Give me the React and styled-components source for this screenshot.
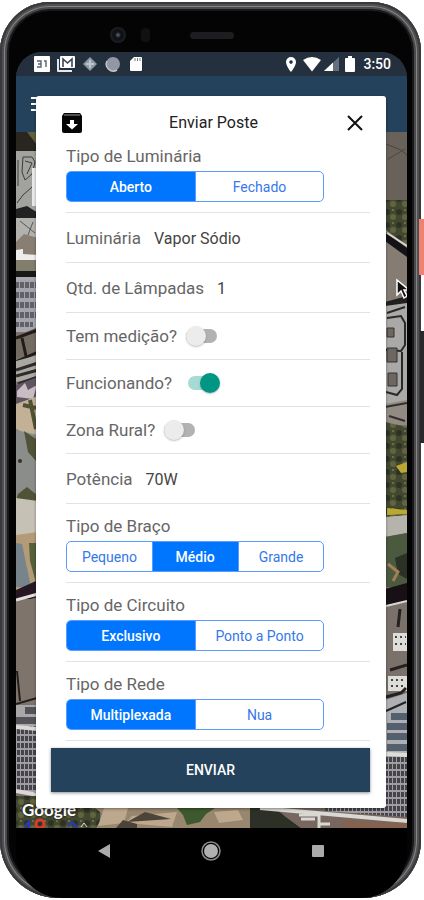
import React, { useState } from "react";
import styled, { createGlobalStyle } from "styled-components";

const GlobalStyle = createGlobalStyle`
  * { box-sizing: border-box; }
  body { margin: 0; background: #fff; font-family: Roboto, sans-serif; }
  button, input, select { font-family: inherit; }
`;

const Page = styled.main`
  max-width: 480px;
  margin: 0 auto;
  padding: 2px 3px 2px 0;
`;

const Device = styled.div`
  position: relative;
  padding: 0 14px 0 16px;
  border-radius: 50px 50px 58px 58px;
  background: #040405;
  box-shadow: inset 0 0 0 2px #39393b, inset 0 0 0 4px #505052,
    inset 0 0 0 5px #858587, inset 0 0 0 7px #4a4a4c, inset 0 0 0 9px #19191b;
`;

const SideKey = styled.span`
  position: absolute;
  right: -3px;
  top: ${(p) => p.$top}px;
  width: ${(p) => p.$width}px;
  height: ${(p) => p.$height}px;
  background: ${(p) => p.$color};
`;

const TopBezel = styled.div`
  display: grid;
  grid-template-columns: 1fr 44px 1fr;
  align-items: center;
  height: 50px;
  padding-top: 16px;
`;

const Sensors = styled.div`
  display: flex;
  align-items: center;
  justify-content: flex-end;
  gap: 15px;
  padding-right: 40px;
`;

const Lens = styled.span`
  width: 16px;
  height: 16px;
  border-radius: 50%;
  background: radial-gradient(circle, #4a5060 0 1px, #101116 3px 5px, #1d1d20 7px);
`;

const Sensor = styled.span`
  width: 9px;
  height: 14px;
  border-radius: 4px;
  background: #111113;
`;

const Speaker = styled.span`
  height: 7px;
  border-radius: 4px;
  background: #1d1d1f;
`;

const Screen = styled.div`
  overflow: hidden;
  border-radius: 26px 26px 0 0;
  background: #24425b;
`;

const StatusBar = styled.div`
  display: flex;
  align-items: center;
  justify-content: space-between;
  height: 24px;
  padding: 0 16px 0 18px;
  background: #25303f;
  color: #fff;
`;

const StatusGroup = styled.div`
  display: flex;
  align-items: center;
  gap: ${(p) => p.$gap}px;
`;

const Clock = styled.time`
  margin-left: 2px;
  font-size: 14px;
  font-weight: 500;
  line-height: 24px;
`;

const Stage = styled.div`
  display: grid;
  grid-template: 56px 1fr / 1fr;
`;

const AppBar = styled.header`
  grid-area: 1 / 1;
  padding: 16px 15px;
`;

const MenuButton = styled.button`
  display: block;
  padding: 4px 0;
  border: 0;
  background: none;
  line-height: 0;
`;

const MapArea = styled.div`
  grid-area: 2 / 1;
  display: grid;
  grid-template: 1fr / 1fr;
  min-height: 0;
  background: #77726b;
`;

const MapImage = styled.svg`
  grid-area: 1 / 1;
  width: 100%;
  height: 0;
  min-height: 100%;
  display: block;
`;

const GoogleMark = styled.span`
  grid-area: 1 / 1;
  align-self: end;
  z-index: 1;
  padding: 0 0 6px 6px;
  color: #fff;
  font-family: Lato, sans-serif;
  font-size: 17px;
  font-weight: 700;
  line-height: 24px;
  text-shadow: 0 0 2px #222, 0 0 2px #222;
`;

const Dialog = styled.section`
  grid-area: 1 / 1 / 3 / 2;
  z-index: 2;
  margin: 20px 21px 20px 20px;
  padding: 16px 16px 16px 15px;
  border-radius: 3px;
  background: #fff;
  box-shadow: 0 1px 3px rgba(0, 0, 0, 0.4);
`;

const DialogHeader = styled.div`
  display: grid;
  grid-template-columns: 22px 1fr 22px;
  align-items: center;
  height: 22px;
  padding: 0 4px 0 10px;
`;

const DialogTitle = styled.h1`
  margin: 0;
  color: #222;
  font-size: 16px;
  font-weight: 400;
  line-height: 22px;
  text-align: center;
`;

const IconButton = styled.button`
  display: flex;
  align-items: center;
  justify-content: center;
  width: 22px;
  height: 22px;
  padding: 0;
  border: 0;
  background: none;
  color: #111;
`;

const Form = styled.form`
  display: flex;
  flex-direction: column;
`;

const Fields = styled.div`
  padding-left: 15px;
`;

const Section = styled.div`
  padding: 12px 0 10px;
  border-bottom: 1px solid #e2e2e2;
`;

const FieldLabel = styled.label`
  color: #666;
  font-size: 17px;
  line-height: 20px;
`;

const SectionTitle = styled.div`
  color: #666;
  font-size: 17px;
  line-height: 20px;
`;

const Segments = styled.div`
  display: flex;
  width: 85%;
  height: 31px;
  margin-top: 5px;
  overflow: hidden;
  border: 1px solid #5b9bff;
  border-radius: 5px;
`;

const SegmentOption = styled.label`
  flex: 1;
  display: flex;
  align-items: center;
  justify-content: center;
  color: #3578ea;
  font-size: 14px;
  cursor: pointer;

  & + & { border-left: 1px solid #5b9bff; }

  &:has(input:checked) {
    background: #0076ff;
    color: #fff;
    font-weight: 500;
  }
`;

const HiddenRadio = styled.input`
  appearance: none;
  width: 0;
  height: 0;
  margin: 0;
`;

const Row = styled.div`
  display: flex;
  align-items: center;
  gap: ${(p) => p.$gap}px;
  height: ${(p) => (p.$compact ? 47 : 50)}px;
  border-bottom: 1px solid #e2e2e2;
`;

const Picker = styled.select`
  appearance: none;
  padding: 2px 0 0;
  border: 0;
  background: none;
  color: #444;
  font-size: 16px;
  line-height: 20px;
`;

const NumberBox = styled.input`
  width: 60px;
  padding: 2px 0 0;
  border: 0;
  background: none;
  color: #444;
  font-size: 16px;
  line-height: 20px;
`;

const Switch = styled.input`
  appearance: none;
  display: flex;
  align-items: center;
  width: 32px;
  height: 20px;
  margin: 0;
  cursor: pointer;

  &::before {
    content: "";
    flex: none;
    width: 31px;
    height: 14px;
    margin-right: -31px;
    border-radius: 7px;
    background: ${(p) => (p.checked ? "#a5dbd3" : "#b2b2b2")};
  }

  &::after {
    content: "";
    flex: none;
    width: 20px;
    height: 20px;
    margin-left: ${(p) => (p.checked ? 12 : 0)}px;
    border-radius: 50%;
    background: ${(p) => (p.checked ? "#009684" : "#ececec")};
    box-shadow: 0 1px 2px rgba(0, 0, 0, 0.25);
  }
`;

const SubmitButton = styled.button`
  height: 44px;
  margin-top: 7px;
  border: 0;
  background: #24425b;
  box-shadow: 0 1px 3px rgba(0, 0, 0, 0.45);
  color: #fff;
  font-size: 14px;
  font-weight: 500;
`;

const NavBar = styled.nav`
  display: flex;
  justify-content: center;
  height: 70px;
  padding: 0 2px 24px 0;
  gap: 59px;
  background: #000;
  border-radius: 0 0 46px 46px;
`;

const NavButton = styled.button`
  display: flex;
  align-items: center;
  justify-content: center;
  width: 48px;
  padding: 0;
  border: 0;
  background: none;
`;

function Segmented({ name, title, options, initial }) {
  const [value, setValue] = useState(initial);
  return (
    <Section>
      <SectionTitle id={name + "-title"}>{title}</SectionTitle>
      <Segments role="radiogroup" aria-labelledby={name + "-title"}>
        {options.map((option) => (
          <SegmentOption key={option}>
            <HiddenRadio
              type="radio"
              name={name}
              value={option}
              checked={value === option}
              onChange={() => setValue(option)}
            />
            {option}
          </SegmentOption>
        ))}
      </Segments>
    </Section>
  );
}

function PickerRow({ id, label, value }) {
  return (
    <Row $gap={13}>
      <FieldLabel htmlFor={id}>{label}</FieldLabel>
      <Picker id={id} defaultValue={value}>
        <option>{value}</option>
      </Picker>
    </Row>
  );
}

function SwitchRow({ id, label, initial = false, gap = 9 }) {
  const [on, setOn] = useState(initial);
  return (
    <Row $compact $gap={gap}>
      <FieldLabel htmlFor={id}>{label}</FieldLabel>
      <Switch id={id} type="checkbox" role="switch" checked={on} onChange={() => setOn(!on)} />
    </Row>
  );
}

function StatusIcons() {
  return (
    <>
      <StatusGroup $gap={7}>
        <svg width="16" height="16" viewBox="0 0 16 16">
          <rect width="16" height="16" rx="1" fill="#fff" />
          <path d="M3 5h4v6H3M4 8h3M10 5h2v6" fill="none" stroke="#5b6470" strokeWidth="1.4" />
        </svg>
        <svg width="18" height="16" viewBox="0 0 18 16">
          <path d="M0 3h2v11h13v2H1q-1 0-1-1z" fill="#e4e7eb" />
          <rect x="3" width="15" height="12" rx="1" fill="#fff" />
          <path d="M6 11V3l4.500 4L15 3v8" fill="none" stroke="#3a4452" strokeWidth="1.600" />
        </svg>
        <svg width="16" height="16" viewBox="0 0 16 16">
          <path d="M8 1l7 7-7 7-7-7z" fill="#8f99a5" />
          <path d="M8 4v8M4 8h8" stroke="#bdc5cd" strokeWidth="2" />
        </svg>
        <svg width="16" height="16" viewBox="0 0 16 16">
          <circle cx="8" cy="8" r="7" fill="#9298a3" />
          <path d="M2 5a7 7 0 0 0 10 9" fill="none" stroke="#c3c7cd" strokeWidth="1.500" />
        </svg>
        <svg width="16" height="16" viewBox="0 0 16 16">
          <path d="M6 1h7q1 0 1 1v12q0 1-1 1H3q-1 0-1-1V5z" fill="#fff" />
          <path d="M7 2v3M9.500 2v3M12 2v3" stroke="#717984" />
        </svg>
      </StatusGroup>
      <StatusGroup $gap={3}>
        <svg width="15" height="16" viewBox="0 0 15 16">
          <path fillRule="evenodd" d="M6 1a5 5 0 0 1 5 5c0 4-5 10-5 10S1 10 1 6a5 5 0 0 1 5-5zm0 3.300a1.800 1.800 0 1 0 0 3.600 1.800 1.800 0 0 0 0-3.600z" fill="#fff" />
        </svg>
        <svg width="18" height="16" viewBox="0 0 18 16">
          <path d="M0 4q9-6 18 0L9 15.500z" fill="#fff" />
        </svg>
        <svg width="15" height="16" viewBox="0 0 15 16">
          <path d="M15 1v14H0z" fill="#66707c" />
          <path d="M9 6.500V15H0z" fill="#fff" />
        </svg>
        <svg width="16" height="16" viewBox="0 0 16 16">
          <path d="M6 0h4v2h2q1 0 1 1v12q0 1-1 1H4q-1 0-1-1V3q0-1 1-1h2z" fill="#fff" />
        </svg>
        <Clock>3:50</Clock>
      </StatusGroup>
    </>
  );
}

function Satellite() {
  return (
    <MapImage viewBox="16 132 391 696" preserveAspectRatio="xMidYMid slice" aria-hidden="true">
      <defs>
        <pattern id="windows" width="4" height="7" patternUnits="userSpaceOnUse">
          <rect width="4" height="7" fill="#a09ea3" />
          <rect x="1" y="1" width="3" height="5" fill="#45444b" />
        </pattern>
        <pattern id="rows" width="5" height="10" patternUnits="userSpaceOnUse">
          <rect width="5" height="10" fill="#a4a4aa" />
          <rect y="2" width="4" height="6" fill="#61616a" />
        </pattern>
        <pattern id="trees" width="12" height="13" patternUnits="userSpaceOnUse">
          <rect width="12" height="13" fill="#42482f" />
          <circle cx="3" cy="4" r="3" fill="#2c3323" />
          <circle cx="9" cy="9" r="3" fill="#626440" />
          <circle cx="9" cy="2" r="1" fill="#80794e" />
        </pattern>
      </defs>
      <rect x="16" y="132" width="391" height="696" fill="#77726b" />

      <path d="M16 132h22v19H16z" fill="#29251f" />
      <path d="M27 132h10v13z" fill="#625f3c" />
      <path d="M16 151h22v60H16z" fill="#a2a29e" />
      <path d="M23 157h9l3 5-3 12-7 6-3-8zM17 203l6-8 9-8 5 2M33 168v30M18 160v26M25 161l7 2-5 11" fill="none" stroke="#3c3c39" />
      <path d="M32 168h5v38h-5z" fill="#e9e9e7" />
      <path d="M16 209l11-3 11 7v6H16z" fill="#222" />
      <path d="M16 218h22v26H16z" fill="#b2b1ae" />
      <path d="M20 221l15 12M33 222l-5 13" stroke="#585857" fill="none" />
      <path d="M16 242l8-8 14 4v18H16z" fill="#887f72" />
      <path d="M16 250l7-1v5l15 1v5H16z" fill="#eeedeb" />
      <path d="M16 260h22v12H16z" fill="#817e6c" />
      <path d="M16 271h22v7H16z" fill="#181817" />
      <path d="M16 277h22v55H16z" fill="#a8a8ae" />
      <path d="M16 280h20v40H16zM16 320h17v7H16z" fill="url(#rows)" />
      <path d="M16 336l22-9v30H16z" fill="#746b62" />
      <path d="M16 338l22-8M22 338l4 18M16 362l22-10" stroke="#211c19" strokeWidth="3" />
      <path d="M16 361l22-6v22l-22 5z" fill="#aaa8a3" />
      <path d="M16 370l22-7M16 376l22-6M18 384l20-7" stroke="#2f2b2b" strokeWidth="3" />
      <path d="M16 385l22-8v26l-22 2z" fill="#625562" />
      <path d="M17 391l8-8 3 7 9-5-4 14-16-2z" fill="#c7bdc3" />
      <path d="M16 404l22-8v44l-22-11z" fill="#c2b197" />
      <path d="M23 405l13 3M30 400l6 29" stroke="#505035" strokeWidth="4" />
      <path d="M16 430l22 5v64H16z" fill="#8b8d8a" />
      <path d="M24 431l12 8v22l-8-9zM18 494l9-7 10 8v6H16z" fill="#505338" />
      <circle cx="20" cy="461" r="2" fill="#392c2c" />
      <path d="M16 498l22 3v34H16z" fill="#c6c1b5" />
      <path d="M16 535l22-3v58H16z" fill="#b39b78" />
      <path d="M16 543l6 1 9 43H16z" fill="#78848b" />
      <path d="M29 543h7v40l-6-22z" fill="#56603a" />
      <path d="M16 590l20-9h2v18H16z" fill="#251824" />
      <path d="M16 600l22-6" stroke="#e3dfdb" strokeWidth="3" />
      <path d="M16 603l22-6v106l-22 2z" fill="#7f746c" />
      <path d="M17 671l3 30M16 704l21-6" stroke="#211e1c" strokeWidth="2" />
      <path d="M16 705h22v24H16z" fill="#aaa7a8" />
      <path d="M25 707h13v7H25zM16 717h22v7H16z" fill="#55535a" />
      <path d="M16 726h22v67H16z" fill="url(#windows)" />
      <path d="M16 727l22 2M16 791l22 4" stroke="#dbd8d8" strokeWidth="4" />

      <path d="M385 132h22v68h-22z" fill="#69625b" />
      <path d="M386 144l15 6 6 5M388 159l17-10" fill="none" stroke="#4b4641" />
      <path d="M385 200h22v52h-22z" fill="url(#trees)" />
      <path d="M385 229l22 17v54l-22 4z" fill="#857c73" />
      <path d="M385 232l22 16v9l-22-16z" fill="#131217" />
      <path d="M387 233l20 13" stroke="#d6d2cf" strokeWidth="2" />
      <path d="M385 302l22-6v9l-22 2z" fill="#211f1f" />
      <path d="M385 306l22-3v103h-22z" fill="#aaa9a7" />
      <path d="M387 313l18-6M387 318l14-2 4 7v22l-4 6-15-1M402 352v37l-5 6-11-3" fill="none" stroke="#292929" strokeWidth="2" />
      <path d="M387 328h7v9h-7zM387 348h10v14h-10zM388 373h9v13h-9z" fill="#6d6661" stroke="#343230" />
      <path d="M385 404l22-4v25h-22z" fill="#928b83" />
      <path d="M385 407l22-4M389 416l16 5" stroke="#332f29" strokeWidth="2" />
      <path d="M385 422l22 5v90h-22z" fill="url(#trees)" />
      <path d="M396 466l11-4v10l-6 1zM387 508l20 2v4l-20 1z" fill="#bba833" />
      <path d="M385 517l22-2v18l-22 4z" fill="#b6b3ac" />
      <path d="M385 537l22-4v54h-22z" fill="#4b593e" />
      <path d="M395 558l12-5v26l-9-5z" fill="#2c3126" />
      <path d="M388 564l10 8-5 9" fill="none" stroke="#a17f59" strokeWidth="3" />
      <path d="M385 589l22-6v19l-22 5z" fill="#171015" />
      <path d="M385 607l22-6v110h-22z" fill="#7b716b" />
      <path d="M386 606l21-5" stroke="#dad8d5" strokeWidth="2" />
      <path d="M393 633h14v18h-14zM388 676h19v15h-19z" fill="#deddda" />
      <path d="M395 637h11M395 644h11M391 680h15M391 686h15" stroke="#454443" strokeWidth="2" strokeDasharray="2 3" />
      <path d="M400 609l-2 18M390 670l17-5M386 697l15-4 5-5" fill="none" stroke="#242120" strokeWidth="3" />
      <path d="M385 700l22-7v62h-22z" fill="#aeb0b3" />
      <path d="M386 711l20-9" stroke="#222" strokeWidth="2" />
      <path d="M391 713h16v7h-16zM387 723h20v7h-20zM387 733h20v7h-20zM387 744h20v7h-20z" fill="#55606e" />
      <path d="M385 756h22v57h-22z" fill="url(#windows)" />
      <path d="M386 754l21 1" stroke="#deddda" strokeWidth="4" />

      <path d="M16 796h84v32H16z" fill="url(#trees)" />
      <path d="M92 806h176v22H96l8-13z" fill="#98866e" />
      <path d="M104 808h24l-4 15-26 3zM132 816l45-4-5 15-46-4zM214 812l24-2 5 10-24 3z" fill="#bda88d" />
      <path d="M177 808h38l-9 6-6 8-13 3-4-10z" fill="#3e592d" />
      <path d="M116 828l7-8 14 4v4zM145 812l26 7-44 3" fill="#4c4439" />
      <path d="M250 807h24l12 10 15 11h-51z" fill="#2c3026" />
      <path d="M275 808h132v20h-106l-15-11z" fill="#77675e" />
      <path d="M325 806h82v11l-82-6z" fill="url(#windows)" />
      <path d="M260 808l147 13" stroke="#dad8d3" strokeWidth="4" />
      <path d="M299 815h20v13M301 819h14M320 824h10" fill="none" stroke="#dad8d3" strokeWidth="3" />
      <path d="M345 821l62 2v5h-66z" fill="#85614f" />
      <path d="M24 827l5-5v6M68 827l4-5 6 6" stroke="#2939bd" strokeWidth="2" fill="none" />
      <circle cx="40" cy="824" r="4" fill="none" stroke="#dc3a2c" strokeWidth="3" />
      <path d="M81 827l3-4 3 4" fill="none" stroke="#ddd" />

      <path d="M397 280v15l4-4 3 7 3-2-3-6h5z" fill="#111" stroke="#fff" strokeWidth="1.500" />
    </MapImage>
  );
}

export default function App() {
  return (
    <Page>
      <GlobalStyle />
      <Device>
        <SideKey $top={217} $height={56} $width={5} $color="#ee8271" />
        <SideKey $top={329} $height={112} $width={4} $color="#29292b" />
        <TopBezel>
          <Sensors>
            <Lens />
            <Sensor />
          </Sensors>
          <Speaker />
        </TopBezel>
        <Screen>
          <StatusBar>
            <StatusIcons />
          </StatusBar>
          <Stage>
            <AppBar>
              <MenuButton type="button" aria-label="Menu">
                <svg width="18" height="16" viewBox="0 0 18 16">
                  <path d="M0 2h18M0 8h18M0 14h18" stroke="#fff" strokeWidth="2" />
                </svg>
              </MenuButton>
            </AppBar>
            <MapArea>
              <Satellite />
              <GoogleMark>Google</GoogleMark>
            </MapArea>
            <Dialog role="dialog" aria-labelledby="dialog-title">
              <DialogHeader>
                <IconButton type="button" aria-label="Arquivar">
                  <svg width="22" height="22" viewBox="0 0 22 22">
                    <path d="M3 1h16l2 3v15q0 2-2 2H3q-2 0-2-2V4z" fill="#050505" />
                    <path d="M3 3h16" stroke="#999" />
                    <path d="M9 8h4v4h4l-6 5.500L5 12h4z" fill="#fff" />
                  </svg>
                </IconButton>
                <DialogTitle id="dialog-title">Enviar Poste</DialogTitle>
                <IconButton type="button" aria-label="Fechar">
                  <svg width="18" height="18" viewBox="0 0 18 18">
                    <path d="M2 2l14 14M16 2L2 16" stroke="currentColor" strokeWidth="2" />
                  </svg>
                </IconButton>
              </DialogHeader>
              <Form onSubmit={(e) => e.preventDefault()}>
                <Fields>
                  <Segmented name="luminaria-tipo" title="Tipo de Luminária" options={["Aberto", "Fechado"]} initial="Aberto" />
                  <PickerRow id="luminaria" label="Luminária" value="Vapor Sódio" />
                  <Row $gap={13}>
                    <FieldLabel htmlFor="lampadas">Qtd. de Lâmpadas</FieldLabel>
                    <NumberBox id="lampadas" inputMode="numeric" defaultValue="1" />
                  </Row>
                  <SwitchRow id="medicao" label="Tem medição?" />
                  <SwitchRow id="funcionando" label="Funcionando?" initial gap={16} />
                  <SwitchRow id="rural" label="Zona Rural?" />
                  <PickerRow id="potencia" label="Potência" value="70W" />
                  <Segmented name="braco" title="Tipo de Braço" options={["Pequeno", "Médio", "Grande"]} initial="Médio" />
                  <Segmented name="circuito" title="Tipo de Circuito" options={["Exclusivo", "Ponto a Ponto"]} initial="Exclusivo" />
                  <Segmented name="rede" title="Tipo de Rede" options={["Multiplexada", "Nua"]} initial="Multiplexada" />
                </Fields>
                <SubmitButton type="submit">ENVIAR</SubmitButton>
              </Form>
            </Dialog>
          </Stage>
        </Screen>
        <NavBar aria-label="Sistema">
          <NavButton type="button" aria-label="Voltar">
            <svg width="14" height="16" viewBox="0 0 14 16">
              <path d="M13 1v14L1 8z" fill="#aaa" />
            </svg>
          </NavButton>
          <NavButton type="button" aria-label="Início">
            <svg width="20" height="20" viewBox="0 0 20 20">
              <circle cx="10" cy="10" r="9" fill="none" stroke="#8a8a8a" strokeWidth="1.500" />
              <circle cx="10" cy="10" r="7" fill="#b0b0b0" />
            </svg>
          </NavButton>
          <NavButton type="button" aria-label="Recentes">
            <svg width="14" height="14" viewBox="0 0 14 14">
              <rect x="1" y="1" width="12" height="12" rx="1" fill="#aaa" />
            </svg>
          </NavButton>
        </NavBar>
      </Device>
    </Page>
  );
}
